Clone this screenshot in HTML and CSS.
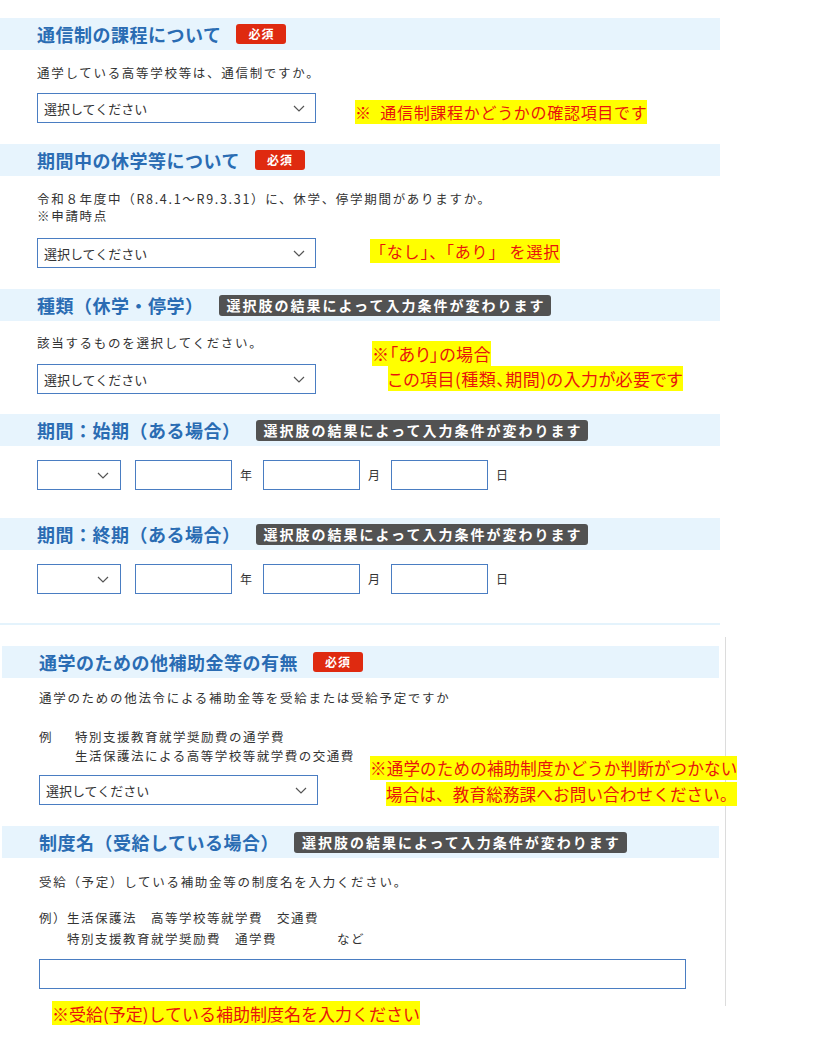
FILE: index.html
```html
<!DOCTYPE html>
<html lang="ja">
<head>
<meta charset="UTF-8">
<title>申請フォーム</title>
<link rel="stylesheet" href="styles.css">
</head>
<body>
<div class="panel">
    <div class="sec">
        <div class="head"><h2>通信制の課程について</h2><span class="must">必須</span></div>
        <div class="body b1">
            <p class="desc">通学している高等学校等は、通信制ですか。</p>
            <div class="row">
                <div class="select"><span>選択してください</span><svg width="12" height="7" viewBox="0 0 12 7"><path d="M1 1l5 5 5-5" fill="none" stroke="#555" stroke-width="1.2"/></svg></div>
                <div class="note n1"><mark>※&nbsp;&nbsp;通信制課程かどうかの確認項目です</mark></div>
            </div>
        </div>
    </div>
    <div class="sec">
        <div class="head"><h2>期間中の休学等について</h2><span class="must">必須</span></div>
        <div class="body b2">
            <p class="desc">令和８年度中（R8.4.1～R9.3.31）に、休学、停学期間がありますか。<br>※申請時点</p>
            <div class="row">
                <div class="select"><span>選択してください</span><svg width="12" height="7" viewBox="0 0 12 7"><path d="M1 1l5 5 5-5" fill="none" stroke="#555" stroke-width="1.2"/></svg></div>
                <div class="note n2"><mark>「なし」、「あり」 を選択</mark></div>
            </div>
        </div>
    </div>
    <div class="sec">
        <div class="head"><h2>種類（休学・停学）</h2><span class="tag">選択肢の結果によって入力条件が変わります</span></div>
        <div class="body b3">
            <div class="col">
                <p class="desc">該当するものを選択してください。</p>
                <div class="select"><span>選択してください</span><svg width="12" height="7" viewBox="0 0 12 7"><path d="M1 1l5 5 5-5" fill="none" stroke="#555" stroke-width="1.2"/></svg></div>
            </div>
            <div class="note n3">
                <div><mark>※「あり」の場合</mark></div>
                <div class="indent"><mark>この項目(種類、期間)の入力が必要です</mark></div>
            </div>
        </div>
    </div>
    <div class="sec">
        <div class="head"><h2>期間：始期（ある場合）</h2><span class="tag">選択肢の結果によって入力条件が変わります</span></div>
        <div class="body b4">
            <div class="date">
                <div class="select small"><span></span><svg width="12" height="7" viewBox="0 0 12 7"><path d="M1 1l5 5 5-5" fill="none" stroke="#555" stroke-width="1.2"/></svg></div>
                <input type="text" class="num"><span class="unit">年</span>
                <input type="text" class="num"><span class="unit">月</span>
                <input type="text" class="num"><span class="unit">日</span>
            </div>
        </div>
    </div>
    <div class="sec">
        <div class="head"><h2>期間：終期（ある場合）</h2><span class="tag">選択肢の結果によって入力条件が変わります</span></div>
        <div class="body b5">
            <div class="date">
                <div class="select small"><span></span><svg width="12" height="7" viewBox="0 0 12 7"><path d="M1 1l5 5 5-5" fill="none" stroke="#555" stroke-width="1.2"/></svg></div>
                <input type="text" class="num"><span class="unit">年</span>
                <input type="text" class="num"><span class="unit">月</span>
                <input type="text" class="num"><span class="unit">日</span>
            </div>
        </div>
    </div>
    <div class="sep"></div>
</div>

<div class="panel2">
    <div class="sec">
        <div class="head"><h2>通学のための他補助金等の有無</h2><span class="must">必須</span></div>
        <div class="body b6">
            <p class="desc">通学のための他法令による補助金等を受給または受給予定ですか</p>
            <div class="row">
                <div class="col">
                    <div class="example">
                        <span class="ex-label">例</span>
                        <span>特別支援教育就学奨励費の通学費<br>生活保護法による高等学校等就学費の交通費</span>
                    </div>
                    <div class="select"><span>選択してください</span><svg width="12" height="7" viewBox="0 0 12 7"><path d="M1 1l5 5 5-5" fill="none" stroke="#555" stroke-width="1.2"/></svg></div>
                </div>
                <div class="note n6">
                    <div><mark>※通学のための補助制度かどうか判断がつかない</mark></div>
                    <div class="indent"><mark>場合は、教育総務課へお問い合わせください。</mark></div>
                </div>
            </div>
        </div>
    </div>
    <div class="sec">
        <div class="head"><h2>制度名（受給している場合）</h2><span class="tag">選択肢の結果によって入力条件が変わります</span></div>
        <div class="body b7">
            <p class="desc">受給（予定）している補助金等の制度名を入力ください。</p>
            <div class="example ex2">
                <span class="ex-label">例）</span>
                <span>生活保護法　高等学校等就学費　交通費<br>特別支援教育就学奨励費　通学費<span class="etc">など</span></span>
            </div>
            <input type="text" class="wide">
        </div>
    </div>
</div>
<div class="note n7"><mark>※受給(予定)している補助制度名を入力ください</mark></div>
</body>
</html>
```

FILE: styles.css
```css
*{
    margin: 0px;
    padding: 0px;
    box-sizing: border-box;
}
body{
    font-family: "Noto Sans CJK JP", sans-serif;
    color: #333;
    background: #fff;
    padding-top: 18px;
}

.panel{
    width: 720px;
}
.panel2{
    width: 724px;
    margin-left: 2px;
    margin-top: 12px;
    padding-top: 9px;
    padding-right: 6px;
    padding-bottom: 17px;
    border-right: 1px solid #dcdcdc;
}

.head{
    height: 32px;
    background: #e7f4fd;
    display: flex;
    align-items: center;
    padding-left: 37px;
    gap: 15px;
}
.head h2{
    font-size: 18px;
    letter-spacing: 0.5px;
    font-weight: 700;
    color: #2a6cb3;
    line-height: 32px;
}
.must{
    background: #df2a10;
    color: #fff;
    font-size: 12px;
    font-weight: 700;
    height: 20px;
    line-height: 20px;
    padding: 0 12px;
    border-radius: 3px;
    letter-spacing: 1px;
}
.tag{
    background: #525252;
    color: #fff;
    font-size: 14px;
    font-weight: 700;
    letter-spacing: 2px;
    height: 21px;
    line-height: 21px;
    padding: 0 6px 0 8px;
    border-radius: 3px;
}

.body{
    padding-left: 37px;
}
.desc{
    font-size: 12.5px;
    letter-spacing: 1.7px;
    line-height: 18px;
}

.row{
    display: flex;
    align-items: flex-end;
}
.col{
    display: flex;
    flex-direction: column;
    width: 279px;
    flex-shrink: 0;
}

.select{
    width: 279px;
    height: 30px;
    border: 1px solid #4a7dc2;
    background: #fff;
    display: flex;
    align-items: center;
    justify-content: space-between;
    padding: 0 10px 0 6px;
    font-size: 13px;
    color: #333;
}
.select.small{
    width: 84px;
    padding-right: 11px;
    margin-right: 14px;
}
input{
    height: 30px;
    border: 1px solid #4a7dc2;
    background: #fff;
    outline: none;
}
.num{
    width: 97px;
}
.unit{
    font-size: 12px;
    margin: 0 11px 0 8px;
    line-height: 30px;
}
.date{
    display: flex;
    align-items: center;
}
.wide{
    width: 647px;
    display: block;
}

.note{
    color: #e8140c;
    line-height: 22px;
    white-space: nowrap;
}
.note mark{
    background: #ffff00;
    color: #e8140c;
}
.indent{
    padding-left: 16px;
}

.b1{ padding-top: 14px; padding-bottom: 21px; }
.b1 .desc{ margin-bottom: 11px; }
.n1{ font-size: 16px; margin-left: 39px; letter-spacing: 0.7px; }

.b2{ padding-top: 14px; padding-bottom: 21px; }
.b2 .desc{ line-height: 17px; margin-bottom: 14px; }
.n2{ font-size: 16px; margin-left: 54px; margin-bottom: 6px; letter-spacing: 0.8px; }

.b3{ display: flex; padding-top: 13px; padding-bottom: 20px; }
.b3 .desc{ margin-bottom: 12px; }
.n3{ font-size: 17px; margin-left: 56px; margin-top: 9px; font-feature-settings: "palt"; letter-spacing: 0.5px; }
.n3 .indent{ margin-top: 3px; }

.b4{ padding-top: 14px; padding-bottom: 28px; }
.b5{ padding-top: 14px; padding-bottom: 29px; }

.sep{
    height: 2px;
    background: #e4f3fc;
}

.b6{ padding-top: 11px; padding-bottom: 21px; }
.example{
    display: flex;
    font-size: 12.5px;
    letter-spacing: 1.5px;
    line-height: 19px;
    white-space: nowrap;
}
.ex-label{
    width: 36px;
    flex-shrink: 0;
}
.b6 .example{ margin-top: 20px; margin-bottom: 10px; }
.n6{ font-size: 16.5px; margin-left: 52px; letter-spacing: 0.2px; }
.n6 .indent{ margin-top: 4px; }

.b7{ padding-top: 15px; }
.ex2{ line-height: 21px; margin-top: 16px; margin-bottom: 10px; }
.ex2 .ex-label{ width: 28px; }
.etc{ margin-left: 60px; }

.n7{
    font-size: 17px;
    margin-left: 52px;
    margin-top: -3px;
    letter-spacing: 0px;
}
```
